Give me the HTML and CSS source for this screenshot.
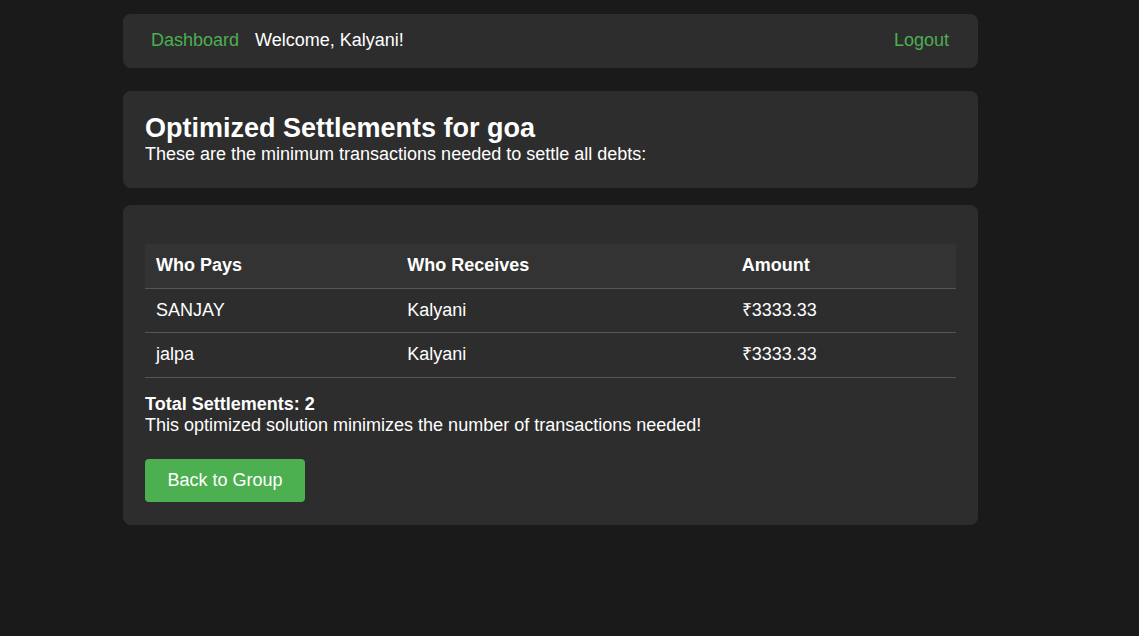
FILE: index.html
```html
<!DOCTYPE html>
<html>
<head>
<meta charset="utf-8">
<link rel="stylesheet" href="styles.css">
</head>
<body>
<div class="page">
  <nav class="nav">
    <a class="nav-link" href="#">Dashboard</a>
    <span class="welcome">Welcome, Kalyani!</span>
    <a class="nav-link logout" href="#">Logout</a>
  </nav>
  <section class="card intro">
    <h2 class="title">Optimized Settlements for goa</h2>
    <p class="subtitle">These are the minimum transactions needed to settle all debts:</p>
  </section>
  <section class="card results">
    <table class="table">
      <thead>
        <tr><th class="c1">Who Pays</th><th class="c2">Who Receives</th><th class="c3">Amount</th></tr>
      </thead>
      <tbody>
        <tr><td>SANJAY</td><td>Kalyani</td><td>₹3333.33</td></tr>
        <tr><td>jalpa</td><td>Kalyani</td><td>₹3333.33</td></tr>
      </tbody>
    </table>
    <p class="summary"><strong>Total Settlements: 2</strong><br>This optimized solution minimizes the number of transactions needed!</p>
    <a class="btn" href="#">Back to Group</a>
  </section>
</div>
</body>
</html>
```

FILE: styles.css
```css
html, body {
  margin: 0;
  padding: 0;
  background: #1a1a1a;
}
body {
  font-family: "Liberation Sans", Arial, sans-serif;
  font-size: 18px;
  color: #ffffff;
}
.page {
  width: 855px;
  margin: 14px 0 0 123px;
}
.nav {
  display: flex;
  align-items: center;
  gap: 16px;
  height: 54px;
  padding: 0 29px 1px 28px;
  background: #2d2d2d;
  border-radius: 8px;
  box-sizing: border-box;
}
.nav-link {
  color: #4caf50;
  text-decoration: none;
}
.logout {
  margin-left: auto;
}
.card {
  background: #2d2d2d;
  border-radius: 8px;
  padding: 20px 22px;
}
.intro {
  margin-top: 23px;
  padding-top: 22px;
  padding-bottom: 23px;
}
.title {
  margin: 0;
  font-size: 27px;
  font-weight: bold;
  line-height: 31px;
}
.subtitle {
  margin: 0;
  line-height: 21px;
}
.results {
  margin-top: 17px;
  padding-top: 39px;
  padding-bottom: 23px;
}
.table {
  width: 100%;
  border-collapse: collapse;
}
.table th, .table td {
  text-align: left;
  padding: 11px 11px;
  line-height: 21.5px;
  border-bottom: 1px solid #555555;
}
.table th {
  background: #333333;
  font-weight: bold;
}
.c1 { width: 251px; box-sizing: border-box; }
.c2 { width: 334px; box-sizing: border-box; }
.c3 { width: 225px; box-sizing: border-box; }
.summary {
  margin: 16px 0 23px 0;
  line-height: 21px;
}
.btn {
  display: inline-block;
  vertical-align: top;
  background: #4caf50;
  color: #ffffff;
  text-decoration: none;
  width: 160px;
  height: 43px;
  line-height: 43px;
  text-align: center;
  border-radius: 4px;
  box-sizing: border-box;
}
```
